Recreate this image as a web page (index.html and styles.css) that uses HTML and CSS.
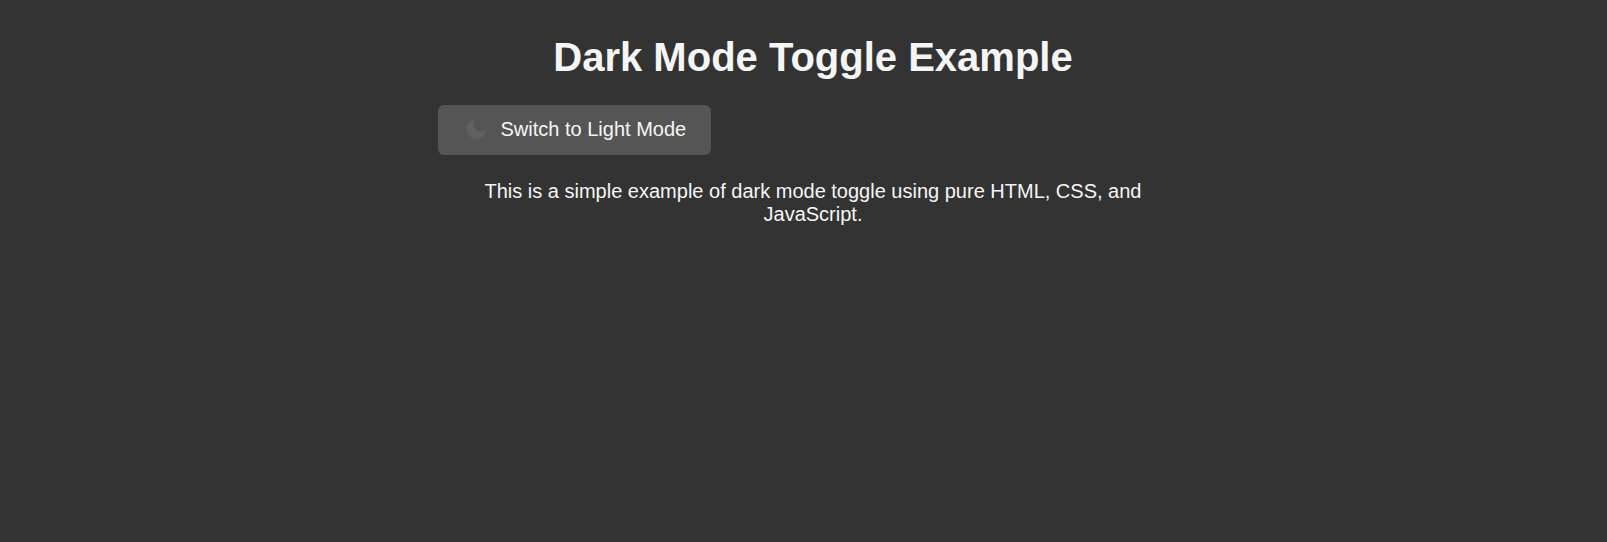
FILE: index.html
```html
<!DOCTYPE html>
<html lang="en">
<head>
<meta charset="utf-8">
<title>Dark Mode Toggle Example</title>
<link rel="stylesheet" href="styles.css">
</head>
<body>
<main class="container">
  <h1 class="title">Dark Mode Toggle Example</h1>
  <button class="toggle" type="button">
    <svg class="moon" viewBox="0 0 21 20" aria-hidden="true"><path d="M8.2.2A10 10 0 1 0 20.3 11A8.4 8.4 0 0 1 8.2.2Z"/></svg>
    <span>Switch to Light Mode</span>
  </button>
  <p class="text">This is a simple example of dark mode toggle using pure HTML, CSS, and JavaScript.</p>
</main>
</body>
</html>
```
FILE: styles.css
```css
body {
  margin: 0;
  background: #333;
  color: #f5f5f5;
  font-family: "Liberation Sans", Arial, sans-serif;
  font-size: 20px;
}
.container {
  display: flex;
  flex-direction: column;
  align-items: flex-start;
  width: 750px;
  margin-left: 438px;
  padding-top: 35px;
}
.title {
  align-self: stretch;
  margin: 0 0 25px;
  font-size: 40px;
  line-height: 45px;
  text-align: center;
}
.toggle {
  display: flex;
  align-items: center;
  gap: 13.5px;
  box-sizing: border-box;
  width: 273px;
  height: 50px;
  padding: 0 0 2px 28px;
  border: 0;
  border-radius: 6.25px;
  background: #555;
  color: #f5f5f5;
  font: inherit;
  white-space: nowrap;
}
.moon {
  width: 21px;
  height: 20px;
  fill: #606060;
}
.text {
  align-self: stretch;
  margin: 25px 0 0;
  line-height: 23px;
  text-align: center;
}
```
